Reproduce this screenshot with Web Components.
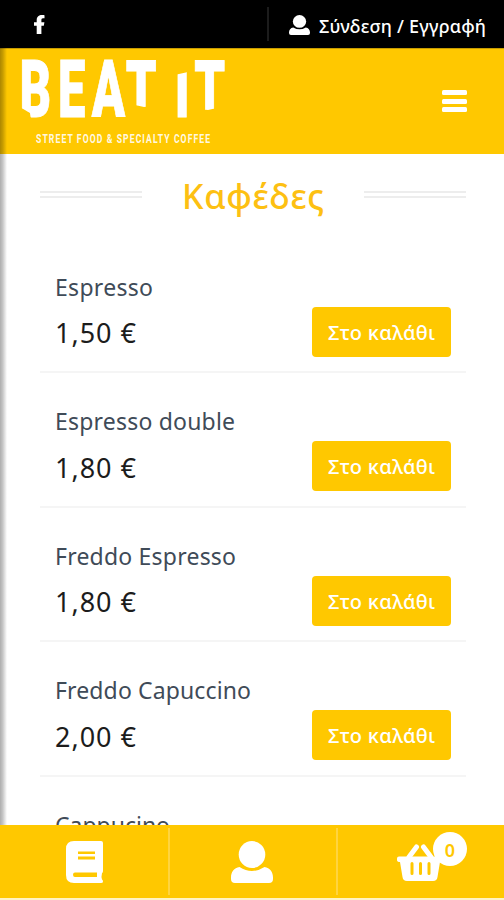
<!DOCTYPE html>
<html lang="el">
<head>
<meta charset="utf-8">
<title>Beat It</title>
<style>
html,body{margin:0;height:100%;overflow:hidden;background:#fff;font-family:"Noto Sans","Open Sans",sans-serif}
</style>
</head>
<body>
<beat-app></beat-app>
<script>
const define = (name, html, init) => customElements.define(name, class extends HTMLElement {
  connectedCallback() {
    if (this.shadowRoot) return;
    const t = document.createElement('template');
    t.innerHTML = html;
    this.attachShadow({mode: 'open'}).append(t.content.cloneNode(true));
    if (init) init(this, this.shadowRoot);
  }
});

// Tracks a single line of text so that it spans the requested width.
define('fit-text', `<style>:host{display:block;white-space:pre;flex:none}span{display:inline-block}</style><span><slot></slot></span>`, (el, root) => {
  const span = root.querySelector('span');
  const want = +el.getAttribute('w');
  const n = el.textContent.length;
  const gap = (want - span.getBoundingClientRect().width) / (n - 1);
  span.style.letterSpacing = gap + 'px';
  span.style.marginRight = -gap + 'px';
});

define('user-icon', `<style>:host{display:block}svg{display:block;width:100%;height:100%}</style>
<svg viewBox="0 0 42 42" preserveAspectRatio="none" fill="#fff"><ellipse cx="21" cy="13.5" rx="13.3" ry="13.5"/><path d="M8.500 26Q21 34 33.500 26C39 27 42 31 42 36.500V38Q42 42 38 42H4Q0 42 0 38V36.500C0 31 3 27 8.500 26Z"/></svg>`);

define('top-bar', `<style>
:host{display:flex;height:48px;background:#000;color:#fff;align-items:center;box-sizing:border-box;padding:0 18px 0 34px}
.fb{width:11px;height:19px;margin-top:1px}
.sep{margin-left:auto;width:2px;height:34px;background:#1c1c1c;margin-right:20px}
user-icon{width:21px;height:20px;margin-right:9px;margin-top:2px}
fit-text{font-size:18px;font-weight:500;line-height:24px;margin-top:3px}
</style>
<svg class="fb" viewBox="0 0 11 19" fill="#fff"><path d="M2.700 19V10.700H0V7.200H2.700V5C2.700 1.700 5 0 8 0C9.300 0 10.500.2 10.500.2V3.300H9C7.700 3.300 7.400 4.100 7.400 5.200V7.200H10.400L9.800 10.700H7.400V19Z"/></svg>
<div class="sep"></div><user-icon></user-icon><fit-text w="167">Σύνδεση / Εγγραφή</fit-text>`);

define('beat-logo', `<style>:host{display:block}svg{display:block}text{fill:#fff;font-family:Roboto,sans-serif}</style>
<svg width="240" height="105" viewBox="0 48 240 105">
<defs><clipPath id="cut"><path d="M15 55H125.500V120H31.500L30 112L21.500 107V55ZM125.500 55H160V104L144 106L135 104L125.500 120ZM170 75L188 71V120H170ZM190 55H230V104L208 109L190 107Z"/></clipPath></defs>
<g clip-path="url(#cut)"><text transform="translate(0 116) scale(.62 1)" font-size="79" font-weight="900" stroke="#fff" stroke-width=".9" x="31.500 93.500 148 203 282 313.500">BEATIT</text></g>
<text y="142" x="0" font-size="13.500" font-weight="700" transform="translate(36 0) scale(.64 1)" textLength="272" lengthAdjust="spacing" fill-opacity=".9">STREET FOOD &amp; SPECIALTY COFFEE</text>
</svg>`);

define('site-header', `<style>
:host{display:flex;height:105.500px;background:#ffc800;align-items:center;justify-content:space-between;box-sizing:border-box;padding-right:37px;border-top:1px solid #c99d00}
.menu{display:grid;gap:3.500px;width:25px;margin-top:0}
.menu i{height:5px;background:#fff;border-radius:1.500px}
</style><beat-logo></beat-logo><div class="menu"><i></i><i></i><i></i></div>`);

define('section-title', `<style>
:host{display:flex;justify-content:space-between;align-items:center;height:85px;margin:0 38px 0 40px}
.r{width:102px;height:3px;border:solid #ededed;border-width:2px 0;margin-bottom:4px}
fit-text{color:#fdc012;font-size:34px;font-weight:500;line-height:44px;margin-top:-1px}
</style><div class="r"></div><fit-text w="142">Καφέδες</fit-text><div class="r"></div>`);

define('product-row', `<style>
:host{display:grid;grid-template-columns:1fr 139px;height:134.600px;box-sizing:border-box;margin:0 38px 0 40px;padding:0 15px 0 15px;border-bottom:2px solid #f5f5f5;grid-template-rows:68px 51px}
.name{grid-column:1/3;align-self:end;color:#3f4b58;font-size:23px;font-weight:400;line-height:30px;margin-bottom:5px}
.price{align-self:center;color:#1c1c1c;font-size:27px;line-height:36px;margin-top:2px}
button{all:unset;box-sizing:border-box;display:flex;justify-content:center;align-items:center;height:50px;background:#ffc800;color:#fff;border-radius:4px;font-size:20px;font-weight:500;width:139px}
button fit-text{margin-top:1px}
</style><fit-text class="name"></fit-text><fit-text class="price"></fit-text><button><fit-text w="107">Στο καλάθι</fit-text></button>`);

define('product-list', `<style>:host{display:block}</style>`, (el, root) => {
  for (const [name, w, price] of [['Espresso',98,'1,50 €'],['Espresso double',180,'1,80 €'],['Freddo Espresso',181,'1,80 €'],['Freddo Capuccino',196,'2,00 €'],['Cappucino',115,'']]) {
    const row = document.createElement('product-row');
    root.append(row);
    const fill = (sel, text, width) => {
      const old = row.shadowRoot.querySelector(sel);
      if (!text) { old.remove(); return; }
      const f = document.createElement('fit-text');
      f.className = old.className;
      f.setAttribute('w', width);
      f.textContent = text;
      old.replaceWith(f);
    };
    fill('.name', name, w);
    fill('.price', price, 81);
    if (!price) row.shadowRoot.querySelector('button').remove();
  }
});

define('bottom-nav', `<style>
:host{display:grid;grid-template-columns:168px 168px 168px;height:73px;background:#ffc800;border-bottom:2px solid #fff3c4}
div{display:flex;justify-content:center;align-items:center;position:relative;box-sizing:border-box}
div+div::before{content:"";position:absolute;left:0;top:3px;bottom:3px;width:1.500px;background:#ffd43f}
user-icon{width:42px;height:42px;margin-top:1px}
.book{margin-top:1px}.basket{margin-top:0}
b{position:absolute;left:97px;top:7px;width:34px;height:34px;border-radius:50%;background:#fff;color:#ffc800;font-size:18px;font-weight:600;line-height:37px;text-align:center}
</style>
<div><svg class="book" width="37" height="42" viewBox="0 0 37 42"><path fill="#fff" d="M8 0H35Q37 0 37 2V30Q37 31.500 36 32.200Q35 36 36 38.500Q37 39 37 40.500Q37 42 35 42H8Q0 42 0 34V8Q0 0 8 0Z"/><path fill="#ffc800" d="M12 10.500H29V13H12ZM12 15.500H29V18.500H12ZM9 31.500H31V36H9Q7 36 7 33.700Q7 31.500 9 31.500Z"/></svg></div>
<div><user-icon></user-icon></div>
<div><svg class="basket" width="46" height="38" viewBox="0 0 46 38"><path d="M12 14L19.500 4M34 14L26.500 4" stroke="#fff" stroke-width="5" stroke-linecap="round"/><path fill="#fff" d="M2 13.500H44Q46 13.500 46 15.500V17Q46 19 43 19L40.500 34Q40 38 36 38H10Q6 38 5.500 34L3 19Q0 19 0 17V15.500Q0 13.500 2 13.500Z"/><path d="M15 20.500V30.500M23.500 20.500V30.500M32 20.500V30.500" stroke="#ffc800" stroke-width="3" stroke-linecap="round"/></svg><b>0</b></div>`);

define('beat-app', `<style>
:host{display:flex;flex-direction:column;height:900px;width:504px;overflow:hidden;position:relative}
main{flex:1;min-height:0;overflow:hidden}
bottom-nav,top-bar,site-header{flex:none}
.edge{position:absolute;left:0;top:48px;width:7px;height:777px;background:linear-gradient(90deg,rgba(0,0,0,.32),rgba(0,0,0,.22) 40%,transparent)}
</style><top-bar></top-bar><site-header></site-header><main><section-title></section-title><product-list></product-list></main><bottom-nav></bottom-nav><div class="edge"></div>`);
</script>
</body>
</html>
